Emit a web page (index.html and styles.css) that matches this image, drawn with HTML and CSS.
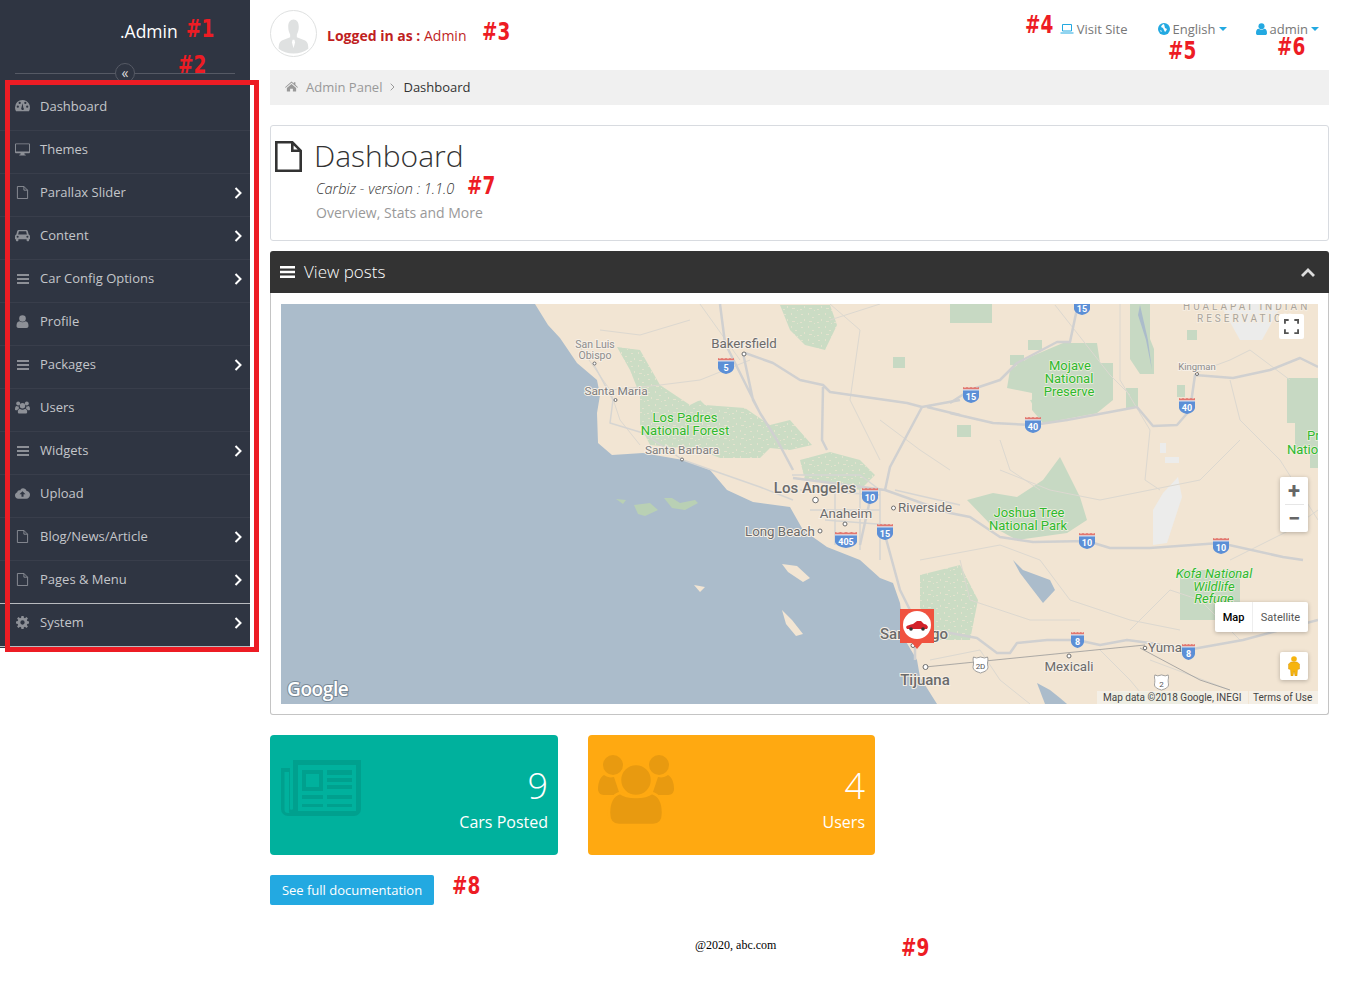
FILE: index.html
```html
<!DOCTYPE html>
<html lang="en">
<head>
<meta charset="utf-8">
<title>Dashboard</title>
<link rel="stylesheet" href="styles.css">
</head>
<body>
<svg class="defs" width="0" height="0" aria-hidden="true">
  <defs>
    <symbol id="i-dash" viewBox="0 0 16 12"><path d="M8 0a8 8 0 0 0-8 8c0 1.5.4 2.9 1.1 4h13.8A8 8 0 0 0 8 0zM3 8.500a1.200 1.200 0 1 1 0-2.400 1.200 1.200 0 0 1 0 2.400zm2-4a1.200 1.200 0 1 1 0-2.400 1.200 1.200 0 0 1 0 2.400zm3.800 6.300a1.600 1.600 0 0 1-2-2.200L8 3.500l.9 5a1.600 1.600 0 0 1-.1 2.300zM11 4.500a1.200 1.200 0 1 1 0-2.400 1.200 1.200 0 0 1 0 2.400zm2 4a1.200 1.200 0 1 1 0-2.400 1.200 1.200 0 0 1 0 2.400z"/></symbol>
    <symbol id="i-desk" viewBox="0 0 16 13"><path d="M1 0h14a1 1 0 0 1 1 1v8.500a1 1 0 0 1-1 1H10l.4 1.500h1.100v1h-7v-1h1.100L6 10.500H1a1 1 0 0 1-1-1V1a1 1 0 0 1 1-1zm0 1v7.500h14V1z"/></symbol>
    <symbol id="i-file" viewBox="0 0 12 14"><path fill="none" stroke="currentColor" d="M.5.500h7l4 4v9H.5zM7.500.500v4h4"/></symbol>
    <symbol id="i-car" viewBox="0 0 16 12"><path d="M4 0h8c.8 0 1.400.5 1.600 1.200L14.600 5c.8.300 1.400 1 1.400 2v3h-1v1.200a.8.800 0 0 1-.8.800h-1a.8.800 0 0 1-.8-.8V10H3.600v1.200a.8.800 0 0 1-.8.800h-1a.8.800 0 0 1-.8-.8V10H0V7c0-1 .6-1.700 1.400-2l1-3.800C2.600.5 3.200 0 4 0zm.2 1.400L3.300 5h9.400l-.9-3.600zM2.800 6.300a1.100 1.100 0 1 0 0 2.200 1.100 1.100 0 0 0 0-2.200zm10.400 0a1.100 1.100 0 1 0 0 2.200 1.100 1.100 0 0 0 0-2.200z"/></symbol>
    <symbol id="i-bars" viewBox="0 0 12 10" preserveAspectRatio="none"><path d="M0 0h12v2H0zM0 4h12v2H0zM0 8h12v2H0z"/></symbol>
    <symbol id="i-user" viewBox="0 0 12 13"><circle cx="6" cy="3.500" r="3.300"/><path d="M0 11c0-3 1-4.500 3-4.700.9.700 1.900 1 3 1s2.100-.3 3-1c2 .2 3 1.700 3 4.700 0 1.300-.8 2-2 2H2c-1.200 0-2-.7-2-2z"/></symbol>
    <symbol id="i-users" viewBox="0 0 16 13"><circle cx="3.400" cy="2.300" r="2.100"/><circle cx="12.600" cy="2.300" r="2.100"/><circle cx="8" cy="4.700" r="2.900"/><path d="M3.600 5.200c.1.800.4 1.500.9 2-1.100.5-1.800 1.300-2.100 2.300H.9C.3 9.500 0 9.100 0 8.600 0 6.600.6 5 1.700 5c.5.300 1.200.5 1.900.2zM12.400 5.200c-.1.800-.4 1.500-.9 2 1.100.5 1.800 1.300 2.100 2.300h1.500c.6 0 .9-.4.900-.9 0-2-.6-3.600-1.700-3.600-.5.300-1.200.5-1.900.2zM5.200 7.800c.8.700 1.700 1 2.800 1s2-.3 2.800-1c1.400.3 2.200 1.600 2.200 3.500 0 1.100-.7 1.700-1.700 1.700H4.700C3.700 13 3 12.400 3 11.300c0-1.900.8-3.200 2.200-3.500z"/></symbol>
    <symbol id="i-cloud" viewBox="0 0 16 11"><path d="M8.500 0c1.800 0 3.300 1.100 3.900 2.800C14.500 2.900 16 4.600 16 6.800 16 9.100 14.200 11 12 11H3.500C1.500 11 0 9.500 0 7.500 0 5.900 1 4.600 2.400 4.200 2.500 3 3.500 2.100 4.700 2.100c.3 0 .6 0 .8.100C6.200.9 7.200 0 8.500 0zM8 3.200 4.800 6.400h2.100V9h2.200V6.400h2.100z" fill-rule="evenodd"/></symbol>
    <symbol id="i-gear" viewBox="0 0 12 12"><path fill-rule="evenodd" d="M5 0h2l.3 1.600 1 .4L9.700 1 11 2.300 10 3.700l.4 1L12 5v2l-1.600.3-.4 1 1 1.400L9.700 11l-1.400-1-1 .4L7 12H5l-.3-1.600-1-.4L2.300 11 1 9.700 2 8.300l-.4-1L0 7V5l1.600-.3.4-1L1 2.300 2.300 1l1.400 1 1-.4zM6 4a2 2 0 1 0 0 4 2 2 0 0 0 0-4z"/></symbol>
    <symbol id="i-chev" viewBox="0 0 8 12"><path fill="none" stroke="currentColor" stroke-width="2" d="M1.500 1 6.500 6l-5 5"/></symbol>
    <symbol id="i-home" viewBox="0 0 14 11"><path d="M7 0l2.500 2.200V1h1.700v2.700L14 6.200l-.7.700L7 1.400.7 6.900 0 6.200zM2 7.200 7 2.800l5 4.400V11H8.500V8h-3v3H2z"/></symbol>
    <symbol id="i-shield" viewBox="0 0 16 19" preserveAspectRatio="none"><path d="M0 3h16v8c0 4-3 6.500-8 8-5-1.500-8-4-8-8z" fill="#5c8fd6"/><path d="M0 0l2 1 2-1 2 1 2-1 2 1 2-1 2 1 2-1v3H0z" fill="#e2766e"/><path d="M0 3h16v1H0z" fill="#fff"/></symbol>
    <symbol id="i-wshield" viewBox="0 0 16 18"><path d="M1 1l3 1 4-1 4 1 3-1c1 3 0 4 0 6 0 3 1 4 0 6-2 3-5 3-7 4-2-1-5-1-7-4-1-2 0-3 0-6 0-2-1-3 0-6z" fill="#fff" stroke="#888" stroke-width=".8"/></symbol>
    <pattern id="speck" width="17" height="13" patternUnits="userSpaceOnUse">
      <rect width="17" height="13" fill="#cbdcc4"/>
      <path d="M2 2h2v1H2zM9 1h1v2H9zM13 5h2v1h-2zM5 7h1v2H5zM1 10h2v1H1zM10 9h3v1h-3zM15 11h1v1h-1z" fill="#e3e2cd"/>
    </pattern>
  </defs>
</svg>

<div class="app">
  <aside class="sidebar">
    <div class="brand">
      <div class="brand-name">.Admin</div>
      <div class="collapse"><span class="collapse-btn">«</span></div>
    </div>
    <ul class="nav">
      <li class="nav-item"><svg class="nav-icon"><use href="#i-dash"/></svg><span class="nav-label">Dashboard</span></li>
      <li class="nav-item"><svg class="nav-icon"><use href="#i-desk"/></svg><span class="nav-label">Themes</span></li>
      <li class="nav-item"><svg class="nav-icon"><use href="#i-file"/></svg><span class="nav-label">Parallax Slider</span><svg class="chev"><use href="#i-chev"/></svg></li>
      <li class="nav-item"><svg class="nav-icon"><use href="#i-car"/></svg><span class="nav-label">Content</span><svg class="chev"><use href="#i-chev"/></svg></li>
      <li class="nav-item"><svg class="nav-icon nav-icon-sm"><use href="#i-bars"/></svg><span class="nav-label">Car Config Options</span><svg class="chev"><use href="#i-chev"/></svg></li>
      <li class="nav-item"><svg class="nav-icon"><use href="#i-user"/></svg><span class="nav-label">Profile</span></li>
      <li class="nav-item"><svg class="nav-icon nav-icon-sm"><use href="#i-bars"/></svg><span class="nav-label">Packages</span><svg class="chev"><use href="#i-chev"/></svg></li>
      <li class="nav-item"><svg class="nav-icon"><use href="#i-users"/></svg><span class="nav-label">Users</span></li>
      <li class="nav-item"><svg class="nav-icon nav-icon-sm"><use href="#i-bars"/></svg><span class="nav-label">Widgets</span><svg class="chev"><use href="#i-chev"/></svg></li>
      <li class="nav-item"><svg class="nav-icon"><use href="#i-cloud"/></svg><span class="nav-label">Upload</span></li>
      <li class="nav-item"><svg class="nav-icon"><use href="#i-file"/></svg><span class="nav-label">Blog/News/Article</span><svg class="chev"><use href="#i-chev"/></svg></li>
      <li class="nav-item nav-item-last"><svg class="nav-icon"><use href="#i-file"/></svg><span class="nav-label">Pages &amp; Menu</span><svg class="chev"><use href="#i-chev"/></svg></li>
      <li class="nav-item nav-item-last"><svg class="nav-icon"><use href="#i-gear"/></svg><span class="nav-label">System</span><svg class="chev"><use href="#i-chev"/></svg></li>
    </ul>
  </aside>

  <main class="main">
    <header class="topbar">
      <div class="who">
        <div class="avatar">
          <svg viewBox="0 0 47 47" class="avatar-img"><path fill="#dfe1e1" d="M23.500 9c3.500 0 5.500 3 5.500 7.500 0 3-.8 6-2 8v3l8 3c3 1.300 4 4 4 9-4 3-9 5-15.500 5S12 42.500 8 39.500c0-5 1-7.700 4-9l8-3v-3c-1.200-2-2-5-2-8C18 12 20 9 23.500 9z"/><path fill="#fff" d="M22.500 30h2l.6 3-1.600 6-1.600-6z"/></svg>
        </div>
        <div class="who-text"><strong>Logged in as :</strong> Admin</div>
      </div>
      <div class="top-links">
        <span class="top-link link-visit"><svg class="tl-icon" viewBox="0 0 14 10"><path fill="none" stroke="#23a9e1" d="M2.500.500h9v6.500h-9zM.5 9h13" /></svg>Visit Site</span>
        <span class="top-link link-lang"><svg class="tl-globe" viewBox="0 0 12 12"><circle cx="6" cy="6" r="6" fill="#23a9e1"/><path fill="#fff" d="M6 1 4 2 3 4l2 1 1 2 1 2 1-1 1-2-2-1zM2 7l1 2 1-1z"/></svg>English<i class="caret"></i></span>
        <span class="top-link link-admin"><svg class="tl-user"><use href="#i-user"/></svg>admin<i class="caret"></i></span>
      </div>
    </header>

    <nav class="crumbs">
      <svg class="crumb-home"><use href="#i-home"/></svg>
      <span class="crumb-link">Admin Panel</span>
      <svg class="crumb-sep" viewBox="0 0 5 8"><path fill="none" stroke="#999" d="M.7.700 4 4 .7 7.300"/></svg>
      <span class="crumb-cur">Dashboard</span>
    </nav>

    <section class="title-panel">
      <svg class="title-icon" viewBox="0 0 27 31"><path fill="none" stroke="#333" stroke-width="2.600" d="M1.300 1.300h16l8.400 8.400v20H1.300zM17.300 1.300v8.400h8.400"/></svg>
      <div class="title-text">
        <h1 class="title">Dashboard</h1>
        <div class="version">Carbiz - version : 1.1.0</div>
        <div class="sub">Overview, Stats and More</div>
      </div>
    </section>

    <section class="map-panel">
      <div class="map-head">
        <svg class="head-bars"><use href="#i-bars"/></svg>
        <span class="head-title">View posts</span>
        <svg class="head-chev" viewBox="0 0 14 9"><path fill="none" stroke="#ddd" stroke-width="2.800" d="M1 8l6-6 6 6"/></svg>
      </div>
      <div class="map-body">
        <div class="map">
          <svg class="map-svg" viewBox="281 304 1037 400">
            <rect x="281" y="304" width="1037" height="400" fill="#abbccb"/>
            <path class="land" d="M535 304 548 325 560 338 577 363 597 380 600 395 597 413 598 443 612 455 643 453 683 460 710 470 727 490 753 502 790 507 803 530 827 547 860 560 880 578 893 583 900 603 905 640 917 660 920 677 937 704H1318V304z"/>
            <g class="forest" fill="url(#speck)">
              <path d="M617 347 640 350 660 385 690 405 700 400 705 405 745 408 770 425 790 420 812 445 790 450 770 448 760 458 720 458 700 450 680 448 650 445 640 425 640 395 630 370z"/>
              <path d="M780 305 830 305 837 325 825 350 805 345 790 330z"/>
              <path d="M800 460 830 452 860 460 875 475 860 490 830 482 805 480z"/>
              <path d="M920 575 960 565 978 600 970 640 940 640 920 620z"/>
              <path d="M1030 400 1060 390 1090 395 1097 413 1043 423z"/>
            </g>
            <g class="forest-solid">
              <path d="M893 357h12v11h-12z"/>
              <path d="M1010 370 1030 357 1063 343 1097 343 1100 363 1113 363 1113 400 1097 413 1043 423 1032 410 1032 393 1007 388z"/>
              <path d="M967 500 993 493 1017 497 1043 480 1060 457 1080 497 1087 520 1067 533 1017 540 993 527z"/>
              <path d="M950 304h42v19h-42zM1130 304h20v35l4 10v25h-14l-10-15zM1010 355h14v10h-14zM1028 340h14v10h-14zM957 425h14v12h-14zM1177 385h8v12h-8zM1126 388h12v20h-12zM1187 330h10v10h-10z"/>
              <path d="M1287 378h31v90h-8v-20h-15v-25h-8z"/>
              <path d="M1180 570h60v50h-60z"/>
              <path d="M1110 692h90v12h-90z"/>
            </g>
            <g fill="#abbccb">
              <path d="M1013 560 1023 570 1050 580 1055 590 1043 603 1033 590 1020 573z"/>
              <path d="M1037 683 1050 690 1060 698 1067 704H1045z"/>
              <path d="M1140 305 1148 340 1152 370 1146 340 1138 315z"/>
            </g>
            <g class="island">
              <path d="M616 499 626 500 623 504zM634 505 650 503 658 510 645 516 638 514zM664 498 672 498 680 503 695 500 698 503 685 510 672 508z"/>
            </g>
            <g fill="#f2e5d3">
              <path d="M782 564 797 566 810 578 803 582 788 572zM694 585 705 587 700 592zM782 610 792 620 803 634 796 636 786 624z"/>
            </g>
            <g fill="#ececeb">
              <path d="M1153 510 1163 493 1178 477 1182 497 1167 543 1153 545z"/>
              <path d="M1160 443h6v10h-6zM1165 457h14v6h-14zM1220 304h62l-20 36h-22z"/>
            </g>
            <g class="road road-minor">
              <path d="M575 340 610 390 620 420 640 445M610 390 660 385 700 380 750 360M700 304 740 360M830 304 860 330 850 400 870 440 880 460M600 330 640 335 690 320M830 320 880 304M880 420 920 450 950 470M1000 470 1050 490 1100 500 1150 490 1200 480 1240 440M1120 304 1120 380 1150 430 1145 480 1160 490M1195 373 1230 360 1250 350 1290 380M1230 380 1240 420 1280 460 1318 520M1230 560 1290 530 1318 510M1240 640 1200 600 1170 590 1130 630M1000 545 1040 560 1070 600 1130 620 1180 630M960 560 970 600 1030 620 1080 620M920 560 1000 545M1150 660 1230 690M930 660 980 650 1000 680 1030 704M1100 650 1130 680 1150 704M1000 440 1010 470 1040 490M1055 305 1110 375 1130 395"/>
            </g>
            <g class="road road-mid">
              <path d="M593 363 613 400 610 423 643 433 683 460 720 473 760 487 793 500M792 475 860 475 880 490 880 560M800 490 880 495M810 510 880 510M825 520 890 525M835 490 835 545M860 490 860 550M895 490 960 505"/>
            </g>
            <g class="road road-major">
              <path d="M720 304 725 343 747 387 760 413 777 440 793 470M743 353 753 400 760 413"/>
              <path d="M745 353 773 363 800 380 823 385 830 392 907 403 922 407 960 400M927 407 960 415M823 387 822 440 827 450M922 407 890 467 885 490"/>
              <path d="M1078 304 1070 342 1057 342 1017 363 1000 380 970 390 950 403"/>
              <path d="M950 413 993 423 1033 425 1067 420 1137 407 1153 426 1177 425 1190 410 1195 375 1233 378 1270 370 1300 358 1318 367"/>
              <path d="M885 490 950 513 970 517 1000 537 1033 542 1087 541 1110 548 1150 548 1220 543 1283 557 1303 560M793 478 885 490"/>
              <path d="M905 632 950 633 977 638 997 653 1010 653 1017 643 1047 640 1077 640 1100 645 1127 640 1150 643 1187 650 1243 640 1318 620"/>
              <path d="M885 535 900 590 915 620 915 660M870 500 860 545"/>
            </g>
            <path class="border-line" d="M925 667 1145 645M1140 648 1200 680 1230 690"/>
            <g class="city">
              <circle cx="744" cy="354" r="2"/><circle cx="594.500" cy="363.500" r="1.500"/><circle cx="615.500" cy="400" r="1.500"/><circle cx="682" cy="459.500" r="1.500"/><circle cx="815.500" cy="500" r="2.800"/><circle cx="845" cy="524" r="2"/><circle cx="893.500" cy="508" r="2"/><circle cx="820" cy="531" r="2"/><circle cx="913" cy="645.500" r="2"/><circle cx="925.500" cy="667" r="2.500"/><circle cx="1069" cy="656" r="2"/><circle cx="1145" cy="648" r="1.800"/><circle cx="1197" cy="374" r="1.500"/>
            </g>
            <g class="lbl lbl-s">
              <text x="595" y="348" text-anchor="middle">San Luis</text>
              <text x="595" y="359" text-anchor="middle">Obispo</text>
              <text x="1197" y="370" text-anchor="middle" class="lbl-xs">Kingman</text>
            </g>
            <g class="lbl lbl-m">
              <text x="616" y="395" text-anchor="middle">Santa Maria</text>
              <text x="682" y="454" text-anchor="middle">Santa Barbara</text>
            </g>
            <g class="lbl">
              <text x="744" y="348" text-anchor="middle">Bakersfield</text>
              <text x="846" y="518" text-anchor="middle">Anaheim</text>
              <text x="898" y="512">Riverside</text>
              <text x="745" y="536">Long Beach</text>
              <text x="1069" y="671" text-anchor="middle">Mexicali</text>
              <text x="1148" y="652" class="lbl-yuma">Yuma</text>
            </g>
            <g class="lbl lbl-big">
              <text x="815" y="493" text-anchor="middle">Los Angeles</text>
              <text x="925" y="685" text-anchor="middle">Tijuana</text>
              <text x="880" y="639">San Diego</text>
            </g>
            <g class="lbl lbl-park">
              <text x="685" y="422" text-anchor="middle">Los Padres</text>
              <text x="685" y="435" text-anchor="middle">National Forest</text>
              <text x="1070" y="370" text-anchor="middle">Mojave</text>
              <text x="1069" y="383" text-anchor="middle">National</text>
              <text x="1069" y="396" text-anchor="middle">Preserve</text>
              <text x="1029" y="517" text-anchor="middle">Joshua Tree</text>
              <text x="1028" y="530" text-anchor="middle">National Park</text>
              <text x="1307" y="440">Pr</text>
              <text x="1287" y="454">Natio</text>
              <text x="1214" y="578" text-anchor="middle" class="lbl-it">Kofa National</text>
              <text x="1214" y="590.500" text-anchor="middle" class="lbl-it">Wildlife</text>
              <text x="1214" y="603" text-anchor="middle" class="lbl-it">Refuge</text>
            </g>
            <g class="lbl-res">
              <text x="1183" y="310">HUALAPAI INDIAN</text>
              <text x="1197" y="322">RESERVATION</text>
            </g>
            <g class="shields">
              <use href="#i-shield" x="718" y="358" width="16" height="16"/><text x="726" y="371">5</text>
              <use href="#i-shield" x="963" y="387" width="16" height="16"/><text x="971" y="400">15</text>
              <use href="#i-shield" x="1025" y="417" width="16" height="16"/><text x="1033" y="430">40</text>
              <use href="#i-shield" x="1179" y="398" width="16" height="16"/><text x="1187" y="411">40</text>
              <use href="#i-shield" x="1074" y="299" width="16" height="16"/><text x="1082" y="312">15</text>
              <use href="#i-shield" x="862" y="488" width="16" height="16"/><text x="870" y="501">10</text>
              <use href="#i-shield" x="835" y="532" width="22" height="16"/><text x="846" y="545">405</text>
              <use href="#i-shield" x="877" y="524" width="16" height="16"/><text x="885" y="537">15</text>
              <use href="#i-shield" x="1079" y="533" width="16" height="16"/><text x="1087" y="546">10</text>
              <use href="#i-shield" x="1213" y="538" width="16" height="16"/><text x="1221" y="551">10</text>
              <use href="#i-shield" x="1071" y="632" width="13" height="16"/><text x="1077.500" y="645">8</text>
              <use href="#i-shield" x="1182" y="644" width="13" height="16"/><text x="1188.500" y="657">8</text>
            </g>
            <use href="#i-wshield" x="972" y="656" width="17" height="18"/>
            <use href="#i-wshield" x="1153" y="674" width="17" height="17"/>
            <g class="shield-w"><text x="980.500" y="669">2D</text><text x="1161.500" y="687">2</text></g>
            <path d="M900 609h34v34h-12l-5 6-5-6h-12z" fill="#f0523f"/>
            <circle cx="917" cy="625" r="14" fill="#fff"/>
            <path d="M906 627c1-2 4-2 7-3l4-3h4l3 3c2 0 3 1 4 3l-1 2h-20z" fill="#d3222a"/>
            <circle cx="911" cy="629" r="1.800" fill="#333"/><circle cx="923" cy="629" r="1.800" fill="#333"/>
            <text class="g-logo" x="287" y="696">Google</text>
            <rect x="1097" y="691" width="151" height="13" fill="#f5f1e9" opacity=".85"/>
            <rect x="1249" y="691" width="69" height="13" fill="#f5f1e9" opacity=".85"/>
            <text class="attr" x="1103" y="701">Map data ©2018 Google, INEGI</text>
            <text class="attr" x="1253" y="701">Terms of Use</text>
          </svg>
          <div class="map-ctl ctl-full"><svg viewBox="0 0 16 16"><path fill="none" stroke="#555" stroke-width="2" d="M1 5V1h4M11 1h4v4M15 11v4h-4M5 15H1v-4"/></svg></div>
          <div class="map-ctl ctl-zoom">
            <span class="zoom-btn">+</span>
            <span class="zoom-sep"></span>
            <span class="zoom-btn">−</span>
          </div>
          <div class="map-ctl ctl-type"><span class="type-on">Map</span><span class="type-off">Satellite</span></div>
          <div class="map-ctl ctl-peg"><svg viewBox="0 0 12 20"><circle cx="6" cy="3" r="2.800" fill="#f6b40e"/><path d="M3 6h6l2.500 2v5l-2 .5L9 20H7l-1-5-1 5H3l-.5-6.500-2-.5V8z" fill="#f6b40e" stroke="#c98a07" stroke-width=".4"/></svg></div>
        </div>
      </div>
    </section>

    <section class="stats">
      <div class="stat stat-teal">
        <svg class="stat-icon stat-news" viewBox="0 0 80 56"><path fill-rule="evenodd" d="M12 0h68v49a7 7 0 0 1-7 7H7a7 7 0 0 1-7-7V8h9v41a2 2 0 0 0 3 0zM5 12H3.500v37.500A3.500 3.500 0 0 0 7 53h1.500a5 5 0 0 1-.5-3V12zM17 5v46h58V5zM21 35h21v4H21zM21 44h21v3H21zM46 44h25v3H46zM46 35h25v4H46zM46 25h25v4H46zM46 10h25v5H46zM46 18h25v4H46zM21 10h21v21H21zm4 4v13h13V14z"/></svg>
        <div class="stat-text"><div class="stat-num">9</div><div class="stat-label">Cars Posted</div></div>
      </div>
      <div class="stat stat-orange">
        <svg class="stat-icon stat-people" viewBox="0 0 76 70">
          <ellipse cx="15" cy="10" rx="10" ry="10"/><ellipse cx="61" cy="10" rx="10" ry="10"/>
          <path d="M6 20c3 2 6 3 10 2l6 18H6c-4 0-6-3-6-6 0-6 2-12 6-14zM70 20c-3 2-6 3-10 2l-6 18h16c4 0 6-3 6-6 0-6-2-12-6-14z"/>
          <ellipse class="people-front" cx="38" cy="25" rx="16" ry="16"/>
          <path class="people-front" d="M22 38c4 3 9 4 16 4s12-1 16-4c7 2 11 9 11 20 0 8-4 12-10 12H21c-6 0-10-4-10-12 0-11 4-18 11-20z"/>
        </svg>
        <div class="stat-text"><div class="stat-num">4</div><div class="stat-label">Users</div></div>
      </div>
    </section>

    <a class="doc-btn" href="#">See full documentation</a>
    <footer class="foot">@2020, abc.com</footer>
  </main>
</div>

<div class="red-box"></div>
<span class="tag tag1">#1</span>
<span class="tag tag2">#2</span>
<span class="tag tag3">#3</span>
<span class="tag tag4">#4</span>
<span class="tag tag5">#5</span>
<span class="tag tag6">#6</span>
<span class="tag tag7">#7</span>
<span class="tag tag8">#8</span>
<span class="tag tag9">#9</span>
</body>
</html>
```

FILE: styles.css
```css
* { box-sizing: border-box; }
html, body { margin: 0; padding: 0; }
body {
  position: relative;
  height: 989px;
  overflow: hidden;
  background: #fff;
  font-family: "Open Sans", "Noto Sans", sans-serif;
  font-size: 13px;
  color: #333;
}
.defs { position: absolute; }
.app { display: flex; align-items: flex-start; }

/* Sidebar */
.sidebar { width: 250px; flex: none; background: #2f3542; height: 648px; }
.brand { height: 87px; padding: 0 15px; }
.brand-name { padding: 19px 0 0 105px; height: 66px; color: #fff; font-size: 17.500px; line-height: 24px; }
.collapse { position: relative; height: 1px; margin-top: 7px; background: #565a65; }
.collapse-btn {
  position: absolute; left: 100px; top: -10px;
  width: 20px; height: 20px; border-radius: 50%;
  background: #2f3542; border: 1px solid #565a65;
  color: #ddd; font-size: 14px; line-height: 17px; text-align: center;
}
.nav { list-style: none; margin: 0; padding: 0; }
.nav-item {
  display: flex; align-items: center;
  height: 43px; padding: 0 8px 6px 15px;
  border-bottom: 1px solid #393e4b;
  color: #c4c6ca;
}
.nav-item:first-child { height: 44px; padding-bottom: 6px; }
.nav-item-last { border-bottom-color: #b9bbbf; }
.nav-icon { width: 15px; height: 13px; margin-right: 10px; flex: none; fill: #8d9097; color: #8d9097; }
.nav-icon-sm { width: 12px; height: 10px; margin: 2px 11.500px 0 1.500px; }
.nav-label { flex: 1; }
.chev { width: 8px; height: 12px; margin-top: 2px; color: #fff; flex: none; }

/* Top bar */
.main { flex: 1; min-width: 0; padding: 0 20px; }
.topbar { display: flex; justify-content: space-between; height: 70px; }
.who { display: flex; align-items: flex-start; padding-top: 10px; }
.avatar { width: 47px; height: 47px; border: 1px solid #dfe1e1; border-radius: 50%; overflow: hidden; }
.avatar-img { display: block; width: 45px; height: 45px; }
.who-text { margin: 16px 0 0 10px; color: #bf1f1f; font-size: 14px; line-height: 20px; }
.top-links { display: flex; padding-top: 19px; color: #777; }
.top-link { display: flex; align-items: center; height: 19px; }
.link-visit { margin-right: 30px; }
.link-lang { margin-right: 29px; }
.link-admin { margin-right: 10px; }
.tl-icon { width: 14px; height: 10px; margin-right: 3px; }
.tl-globe { width: 12px; height: 12px; margin-right: 3px; }
.tl-user { width: 11px; height: 12px; margin-right: 3px; fill: #23a9e1; }
.caret { width: 0; height: 0; margin-left: 3px; border: 4.500px solid transparent; border-top-color: #23a9e1; border-bottom: 0; }

/* Breadcrumb */
.crumbs { display: flex; align-items: center; height: 35px; padding: 0 0 2px 15px; background: #f0f0f0; }
.crumb-home { width: 13px; height: 11px; fill: #999; margin-right: 8px; }
.crumb-link { color: #999; }
.crumb-sep { width: 5px; height: 8px; margin: 0 8px; }
.crumb-cur { color: #333; }

/* Title panel */
.title-panel {
  display: flex; height: 116px; margin-top: 20px; padding: 15px 0 0 4px;
  border: 1px solid #d8dbe0; border-radius: 3px;
}
.title-icon { width: 27px; height: 31px; flex: none; margin-right: 12px; }
.title { margin: -5px 0 0; font-size: 30px; font-weight: 300; line-height: 40px; color: #333; }
.version { margin: 3px 0 0 2px; font-size: 14.500px; font-weight: 300; font-style: italic; line-height: 20px; }
.sub { margin: 4px 0 0 2px; font-size: 14px; color: #999; line-height: 20px; }

/* Map panel */
.map-panel { margin-top: 10px; }
.map-head {
  display: flex; align-items: center; height: 42px; padding: 0 14px 2px 10px;
  background: #333; color: #fff; border-radius: 3px 3px 0 0;
}
.head-bars { width: 15px; height: 12px; fill: #fff; margin: 2px 9px 0 0; }
.head-title { flex: 1; font-size: 17px; font-weight: 300; }
.head-chev { width: 14px; height: 9px; margin-top: 2px; }
.map-body { padding: 11px 10px 10px; height: 422px; border: 1px solid #c4c4c4; border-top: 0; border-radius: 0 0 3px 3px; }
.map { position: relative; width: 1037px; height: 400px; overflow: hidden; }
.map-svg { display: block; width: 1037px; height: 400px; font-family: Roboto, sans-serif; }
.land { fill: #f2e5d3; }
.forest-solid path { fill: #c7d9c3; }
.island path { fill: #b9d0b4; }
.road { fill: none; stroke-linejoin: round; }
.road-major { stroke-width: 2.500; stroke: #d0d0d0; }
.road-mid { stroke-width: 1.500; stroke: #d6d5d2; }
.road-minor { stroke-width: 1; stroke: #dcd8d0; }
.border-line { fill: none; stroke: #999; stroke-width: .8; }
.city circle { fill: #fff; stroke: #6c6c6c; stroke-width: 1; }
.lbl text { font-size: 13.300px; fill: #6b6b6b; stroke: #f6efe6; stroke-width: 2px; paint-order: stroke; }
.lbl-yuma { font-size: 12px; }
.lbl-s text { font-size: 10.500px; fill: #8d8d8d; }
.lbl-s .lbl-xs { font-size: 9.500px; }
.lbl-m text { font-size: 11.800px; fill: #7d7d7d; }
.lbl-big text { font-size: 15px; font-weight: 500; }
.lbl-park text { fill: #2eb82e; font-size: 13px; stroke-width: 1.500px; stroke: #eef0de; }
.lbl-park .lbl-it { font-style: italic; }
.lbl-res text { font-size: 10px; fill: #a9a49c; letter-spacing: 3px; stroke: #f5ede1; stroke-width: 2px; paint-order: stroke; }
.shields text { font-size: 9px; font-weight: 700; fill: #fff; text-anchor: middle; }
.shield-w text { font-size: 8px; fill: #555; text-anchor: middle; }
.g-logo { font-size: 19px; font-weight: 600; fill: #fff; stroke: #7a8a97; stroke-width: 2px; paint-order: stroke; font-family: "Open Sans", sans-serif; letter-spacing: -.4px; }
.attr { font-size: 10px; fill: #444; }
.map-ctl { position: absolute; background: #fff; border-radius: 2px; box-shadow: 0 1px 4px rgba(0,0,0,.25); font-family: Roboto, sans-serif; }
.ctl-full { right: 14px; top: 10px; width: 25px; height: 25px; padding: 5px; box-shadow: none; }
.ctl-full svg { display: block; width: 15px; height: 15px; }
.ctl-zoom { right: 10px; top: 173px; width: 28px; height: 55px; display: flex; flex-direction: column; align-items: center; }
.zoom-btn { height: 27px; font-size: 22px; font-weight: 700; line-height: 27px; color: #666; }
.zoom-sep { width: 19px; height: 1px; background: #e6e6e6; }
.ctl-type { right: 10px; top: 298px; display: flex; height: 30px; font-size: 11px; line-height: 31px; }
.type-on { width: 38px; text-align: center; font-weight: 500; color: #000; border-right: 1px solid #eee; }
.type-off { width: 55px; text-align: center; color: #555; }
.ctl-peg { right: 10px; top: 348px; width: 28px; height: 28px; padding: 4px 7px; }
.ctl-peg svg { display: block; width: 14px; height: 20px; }

/* Stats */
.stats { display: flex; margin-top: 20px; gap: 30px; }
.stat { position: relative; display: flex; justify-content: flex-end; height: 120px; border-radius: 4px; color: #fff; padding: 0 10px; }
.stat-teal { width: 288px; background: #00b19d; }
.stat-orange { width: 287px; background: #ffa911; }
.stat-icon { position: absolute; }
.stat-news { left: 11px; top: 25px; width: 80px; height: 56px; fill: #00a08e; }
.stat-people { left: 10px; top: 20px; width: 76px; height: 70px; fill: #e89a10; }
.people-front { stroke: #ffa911; stroke-width: 2.500px; }
.stat-text { text-align: right; }
.stat-num { margin-top: 27px; font-size: 36px; font-weight: 300; line-height: 48px; }
.stat-label { margin-top: 1px; font-size: 16px; font-weight: 400; line-height: 22px; }

.doc-btn {
  display: block; width: 164px; height: 30px; margin-top: 20px;
  background: #23a9e1; border-radius: 2px;
  color: #fff; font-size: 13px; line-height: 30px; text-align: center; text-decoration: none;
}
.foot { margin: 32px 0 0 425px; font-family: "Liberation Serif", serif; font-size: 12px; line-height: 16px; color: #000; }

/* Red annotations */
.red-box { position: absolute; left: 5px; top: 80px; width: 254px; height: 572px; border: 5px solid #ed1c24; }
.tag {
  position: absolute; font-family: "DejaVu Sans Condensed", sans-serif; font-weight: 700;
  font-size: 25px; line-height: 26px; color: #ed1c24;
  transform: scaleX(.82); transform-origin: left center;
}
.tag1 { left: 186px; top: 16px; }
.tag2 { left: 178px; top: 52px; }
.tag3 { left: 482px; top: 19px; }
.tag4 { left: 1025px; top: 12px; }
.tag5 { left: 1168px; top: 38px; }
.tag6 { left: 1277px; top: 34px; }
.tag7 { left: 467px; top: 173px; }
.tag8 { left: 452px; top: 873px; }
.tag9 { left: 901px; top: 935px; }
```
